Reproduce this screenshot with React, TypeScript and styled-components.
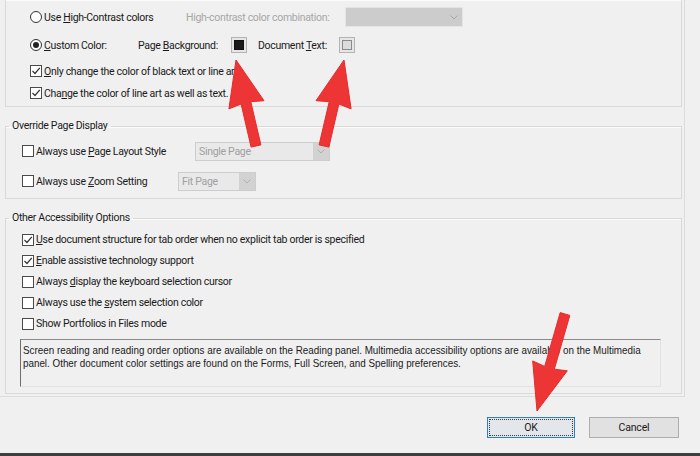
import React from "react";
import styled, { createGlobalStyle } from "styled-components";

const GlobalStyle = createGlobalStyle`
  html, body { margin: 0; padding: 0; background: #f0f0f0; }
  body { font-family: Roboto, "Noto Sans", sans-serif; }
`;

const Window = styled.div`
  position: relative;
  width: 700px;
  height: 456px;
  overflow: hidden;
  box-sizing: border-box;
  background: #f0f0f0;
  border-bottom: 3px solid #3f3f3f;
  display: flex;
  flex-direction: column;
  font-family: Roboto, "Noto Sans", sans-serif;
  font-size: 10.5px;
  letter-spacing: -0.3px;
  color: #1a1a1a;
`;

const Panel = styled.div`
  width: 685px;
  box-sizing: border-box;
  padding: 0 2px 2px 5px;
  border-right: 1px solid #dcdcdc;
  border-bottom: 1px solid #dcdcdc;
`;

const Group = styled.fieldset<{ $mt?: number; $open?: boolean; $pt?: number; $pb?: number }>`
  margin: ${(p) => p.$mt ?? 0}px 0 0 0;
  padding: ${(p) => p.$pt ?? 0}px 0 ${(p) => p.$pb ?? 0}px 0;
  min-width: 0;
  border: 1px solid #d9d9d9;
  border-top: ${(p) => (p.$open ? "none" : "1px solid #d9d9d9")};
  box-shadow: inset 0 1px 0 #fbfbfb;
`;

const Legend = styled.legend`
  margin-left: 3px;
  padding: 0 3px;
  line-height: 14px;
  color: #1a1a1a;
`;

const Row = styled.div<{ $h: number; $pl: number }>`
  display: flex;
  align-items: center;
  height: ${(p) => p.$h}px;
  padding-left: ${(p) => p.$pl}px;
`;

const Cell = styled.div<{ $w?: number }>`
  display: flex;
  align-items: center;
  flex: none;
  width: ${(p) => (p.$w ? `${p.$w}px` : "auto")};
  white-space: nowrap;
`;

const Muted = styled.span`
  color: #a6a6a6;
`;

const Box = styled.span`
  flex: none;
  width: 12px;
  height: 12px;
  box-sizing: border-box;
  border: 1px solid #4a4a4a;
  background: #fff;
  margin-right: 2px;
  display: flex;
  align-items: center;
  justify-content: center;
`;

const Round = styled.span<{ $on?: boolean }>`
  flex: none;
  width: 12px;
  height: 12px;
  box-sizing: border-box;
  border-radius: 50%;
  border: 1px solid #333;
  background: #fff;
  margin-right: 2px;
  display: flex;
  align-items: center;
  justify-content: center;
  &::after {
    content: "";
    width: 6px;
    height: 6px;
    border-radius: 50%;
    background: ${(p) => (p.$on ? "#222" : "transparent")};
  }
`;

const Swatch = styled.span<{ $fill: string; $edge: string }>`
  flex: none;
  width: 16px;
  height: 16px;
  box-sizing: border-box;
  border: 1px solid #b4b4b4;
  background: #e6e6e6;
  display: flex;
  align-items: center;
  justify-content: center;
  &::after {
    content: "";
    width: 10px;
    height: 10px;
    box-sizing: border-box;
    border: 1px solid ${(p) => p.$edge};
    background: ${(p) => p.$fill};
  }
`;

const Gap = styled.span<{ $w: number }>`
  flex: none;
  width: ${(p) => p.$w}px;
`;

const Select = styled.div<{ $w: number; $h: number; $flat?: boolean }>`
  flex: none;
  display: flex;
  width: ${(p) => p.$w}px;
  height: ${(p) => p.$h}px;
  box-sizing: border-box;
  border: 1px solid ${(p) => (p.$flat ? "#e4e4e4" : "#cdcdcd")};
  background: ${(p) => (p.$flat ? "#cccccc" : "#e9e9e9")};
  color: #a0a0a0;
`;

const SelectText = styled.span`
  flex: 1;
  display: flex;
  align-items: center;
  padding-left: 3px;
`;

const SelectButton = styled.span<{ $flat?: boolean }>`
  flex: none;
  width: 16px;
  display: flex;
  align-items: center;
  justify-content: center;
  background: ${(p) => (p.$flat ? "transparent" : "#d2d2d2")};
`;

const Note = styled.div`
  margin: 5px 20px 0 14px;
  height: 48px;
  box-sizing: border-box;
  padding: 4px 2px;
  border-top: 1px solid #8a8a8a;
  border-left: 1px solid #6e6e6e;
  border-right: 1px solid #e2e2e2;
  border-bottom: 1px solid #e2e2e2;
  background: #f0f0f0;
  overflow: hidden;
`;

/* the dialog uses a condensed face here; squeeze Arial-metric text to match */
const NoteText = styled.div`
  font-family: "Liberation Sans", Arial, sans-serif;
  font-size: 11.5px;
  letter-spacing: 0;
  line-height: 13px;
  color: #1a1a1a;
  white-space: nowrap;
  transform: scaleX(0.855);
  transform-origin: 0 0;
`;

const ButtonBar = styled.div`
  display: flex;
  justify-content: flex-end;
  gap: 14px;
  padding: 20px 21px 0 0;
`;

const Button = styled.button<{ $w: number; $primary?: boolean }>`
  width: ${(p) => p.$w}px;
  height: 21px;
  box-sizing: border-box;
  border: 1px solid ${(p) => (p.$primary ? "#2f7fc4" : "#adadad")};
  background: ${(p) => (p.$primary ? "#e3e7eb" : "#e1e1e1")};
  outline: ${(p) => (p.$primary ? "1px dotted #3a3a3a" : "none")};
  outline-offset: -3px;
  font-family: Roboto, "Noto Sans", sans-serif;
  font-size: 10.5px;
  letter-spacing: -0.2px;
  color: #1a1a1a;
  padding: 0;
`;

const Overlay = styled.svg`
  position: absolute;
  left: 0;
  top: 0;
  pointer-events: none;
`;

function Check({ on }: { on?: boolean }) {
  return (
    <Box>
      {on && (
        <svg width="10" height="10" viewBox="0 0 10 10">
          <polyline points="1.5,5 4,7.5 8.8,1.8" fill="none" stroke="#333" strokeWidth="1.2" />
        </svg>
      )}
    </Box>
  );
}

function Chevron({ color }: { color: string }) {
  return (
    <svg width="8" height="5" viewBox="0 0 8 5">
      <polyline points="0.5,0.5 4,4 7.5,0.5" fill="none" stroke={color} strokeWidth="1" />
    </svg>
  );
}

type Pt = [number, number];

function arrow(tail: Pt, tip: Pt, headLen: number, headHalf: number, shaftHalf: number) {
  const dx = tip[0] - tail[0];
  const dy = tip[1] - tail[1];
  const l = Math.hypot(dx, dy);
  const ux = dx / l;
  const uy = dy / l;
  const nx = -uy;
  const ny = ux;
  const bx = tip[0] - ux * headLen;
  const by = tip[1] - uy * headLen;
  const pts: Pt[] = [
    [tail[0] + nx * shaftHalf, tail[1] + ny * shaftHalf],
    [bx + nx * shaftHalf, by + ny * shaftHalf],
    [bx + nx * headHalf - ux * 2, by + ny * headHalf - uy * 2],
    tip,
    [bx - nx * headHalf - ux * 2, by - ny * headHalf - uy * 2],
    [bx - nx * shaftHalf, by - ny * shaftHalf],
    [tail[0] - nx * shaftHalf, tail[1] - ny * shaftHalf],
  ];
  return pts.map((p) => `${p[0].toFixed(1)},${p[1].toFixed(1)}`).join(" ");
}

const arrows = [
  arrow([256, 146], [236, 60], 44, 18, 5),
  arrow([324, 146], [344, 60], 44, 18, 5),
  arrow([565, 314], [537, 411], 45, 18, 5),
];

const others = [
  { on: true, label: <><u>U</u>se document structure for tab order when no explicit tab order is specified</> },
  { on: true, label: <><u>E</u>nable assistive technology support</> },
  { on: false, label: <>Always <u>d</u>isplay the keyboard selection cursor</> },
  { on: false, label: <>Always use the <u>s</u>ystem selection color</> },
  { on: false, label: <>Show Portfolios in Files mode</> },
];

export default function App() {
  return (
    <>
      <GlobalStyle />
      <Window>
        <Panel>
          <Group $open $pt={3} $pb={3}>
            <Row $h={28} $pl={24}>
              <Cell $w={156}>
                <Round />
                <span>Use <u>H</u>igh-Contrast colors</span>
              </Cell>
              <Cell $w={159}>
                <Muted>High-contrast color combination:</Muted>
              </Cell>
              <Select $w={118} $h={20} $flat>
                <SelectText />
                <SelectButton $flat>
                  <Chevron color="#a8a8a8" />
                </SelectButton>
              </Select>
            </Row>
            <Row $h={28} $pl={24}>
              <Cell $w={108}>
                <Round $on />
                <span><u>C</u>ustom Color:</span>
              </Cell>
              <Cell $w={93}>
                <span>Page <u>B</u>ackground:</span>
              </Cell>
              <Swatch $fill="#1a1a1a" $edge="#111" />
              <Gap $w={11} />
              <Cell $w={81}>
                <span>Document <u>T</u>ext:</span>
              </Cell>
              <Swatch $fill="#dcdcdc" $edge="#8a8a8a" />
            </Row>
            <Row $h={24} $pl={24}>
              <Check on />
              <span><u>O</u>nly change the color of black text or line art</span>
            </Row>
            <Row $h={20} $pl={24}>
              <Check on />
              <span>Cha<u>n</u>ge the color of line art as well as text.</span>
            </Row>
          </Group>

          <Group $mt={12} $pt={3} $pb={2}>
            <Legend>Override Page Display</Legend>
            <Row $h={30} $pl={16}>
              <Cell $w={173}>
                <Check />
                <span>Always use <u>P</u>age Layout Style</span>
              </Cell>
              <Select $w={135} $h={19}>
                <SelectText>Single Page</SelectText>
                <SelectButton>
                  <Chevron color="#b0b0b0" />
                </SelectButton>
              </Select>
            </Row>
            <Row $h={30} $pl={16}>
              <Cell $w={156}>
                <Check />
                <span>Always use <u>Z</u>oom Setting</span>
              </Cell>
              <Select $w={78} $h={19}>
                <SelectText>Fit Page</SelectText>
                <SelectButton>
                  <Chevron color="#b0b0b0" />
                </SelectButton>
              </Select>
            </Row>
          </Group>

          <Group $mt={12} $pt={4} $pb={6}>
            <Legend>Other Accessibility Options</Legend>
            {others.map((o, i) => (
              <Row key={i} $h={21} $pl={16}>
                <Check on={o.on} />
                <span>{o.label}</span>
              </Row>
            ))}
            <Note>
              <NoteText>
                Screen reading and reading order options are available on the Reading panel. Multimedia accessibility options are available on the Multimedia
                <br />
                panel. Other document color settings are found on the Forms, Full Screen, and Spelling preferences.
              </NoteText>
            </Note>
          </Group>
        </Panel>

        <ButtonBar>
          <Button $w={88} $primary>OK</Button>
          <Button $w={90}>Cancel</Button>
        </ButtonBar>

        <Overlay width="700" height="456" viewBox="0 0 700 456">
          {arrows.map((pts, i) => (
            <polygon key={i} points={pts} fill="#ee3535" stroke="#e82a2a" strokeWidth="1" strokeLinejoin="round" />
          ))}
        </Overlay>
      </Window>
    </>
  );
}
